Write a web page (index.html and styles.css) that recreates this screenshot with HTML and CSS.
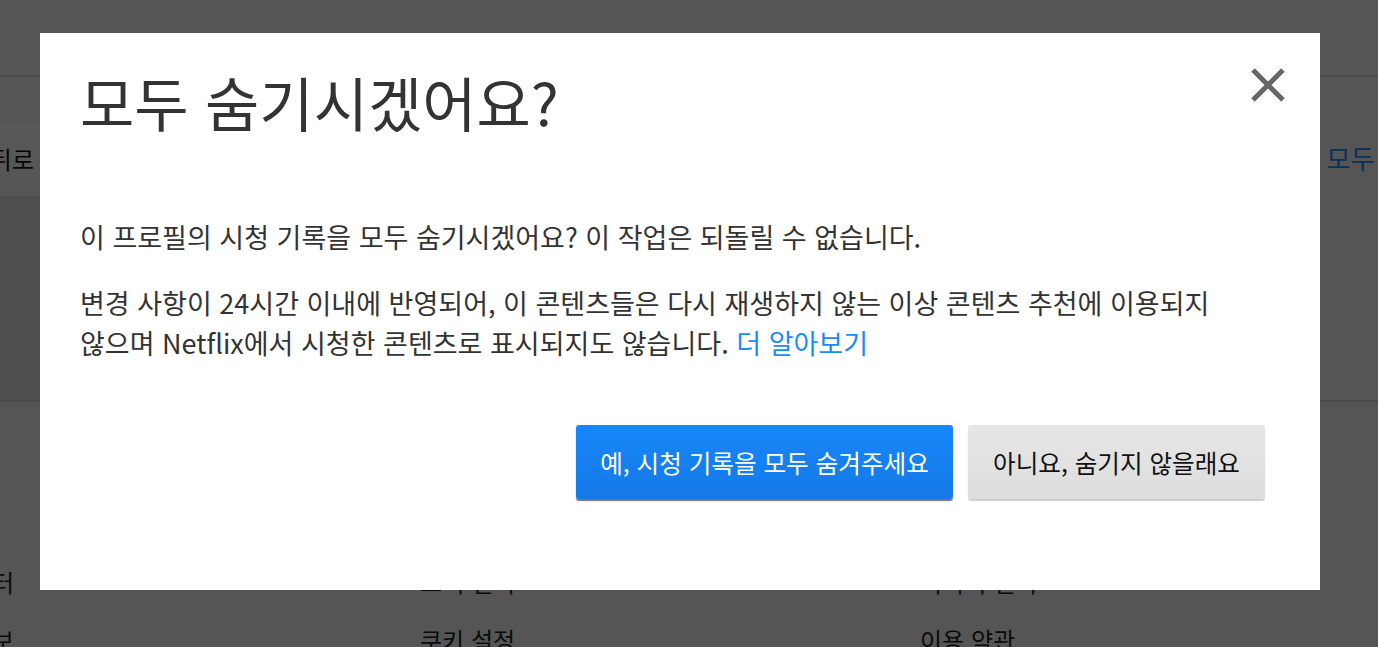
FILE: index.html
```html
<!DOCTYPE html>
<html lang="ko">
<head>
<meta charset="utf-8">
<title>모두 숨기시겠어요?</title>
<link rel="stylesheet" href="styles.css">
</head>
<body>
<div class="page">
  <div class="page-header"></div>
  <div class="page-top">
    <div class="back-btn">뒤로</div>
    <div class="hide-all">모두</div>
  </div>
  <div class="page-list"></div>
  <div class="page-footer">
    <div class="footer-row">
      <span class="fcol c1">센터</span>
      <span class="fcol c2">고객 센터</span>
      <span class="fcol c3">미디어 센터</span>
    </div>
    <div class="footer-row">
      <span class="fcol c1">정보</span>
      <span class="fcol c2">쿠키 설정</span>
      <span class="fcol c3">이용 약관</span>
    </div>
  </div>
</div>
<div class="overlay">
  <div class="modal" role="dialog">
    <div class="modal-head">
      <h1 class="modal-title">모두 숨기시겠어요?</h1>
      <button class="close-btn" aria-label="닫기">
        <svg width="36" height="36" viewBox="0 0 36 36"><path d="M3 3 L33 33 M33 3 L3 33" stroke="#666" stroke-width="5" fill="none"/></svg>
      </button>
    </div>
    <div class="modal-body">
      <p class="para">이 프로필의 시청 기록을 모두 숨기시겠어요? 이 작업은 되돌릴 수 없습니다.</p>
      <p class="para">변경 사항이 24시간 이내에 반영되어, 이 콘텐츠들은 다시 재생하지 않는 이상 콘텐츠 추천에 이용되지 않으며 Netflix에서 시청한 콘텐츠로 표시되지도 않습니다. <a class="learn" href="#">더 알아보기</a></p>
    </div>
    <div class="modal-actions">
      <button class="btn btn-primary">예, 시청 기록을 모두 숨겨주세요</button>
      <button class="btn btn-secondary">아니요, 숨기지 않을래요</button>
    </div>
  </div>
</div>
</body>
</html>
```
FILE: styles.css
```css
html, body {
  margin: 0;
  padding: 0;
}
body {
  font-family: "Noto Sans CJK KR", "Noto Sans", sans-serif;
  background: #f3f3f3;
  width: 1378px;
  height: 647px;
  overflow: hidden;
  word-break: keep-all;
}
.page {
  height: 647px;
  display: flex;
  flex-direction: column;
}
.page-header {
  height: 75px;
  border-bottom: 2px solid #dcdcdc;
  flex: none;
}
.page-top {
  height: 121px;
  display: flex;
  justify-content: space-between;
  align-items: flex-start;
  padding-top: 46px;
  box-sizing: border-box;
}
.back-btn {
  margin-left: -30px;
  width: 70px;
  height: 75px;
  background: linear-gradient(#fcfcfc, #f4f4f4);
  border-bottom: 2px solid #e0e0e0;
  box-sizing: border-box;
  font-size: 24px;
  line-height: 72px;
  color: #111;
  text-align: right;
  padding-right: 6px;
}
.hide-all {
  margin-top: 18px;
  margin-right: 3px;
  font-size: 26.5px;
  line-height: 34px;
  color: #1f8fff;
}
.page-list {
  height: 204px;
  border-bottom: 2px solid #d8d8d8;
  background: linear-gradient(90deg, #e6e6e6 0, #e6e6e6 40px, #f3f3f3 40px);
  box-sizing: border-box;
  flex: none;
}
.page-footer {
  padding-top: 162px;
  display: flex;
  flex-direction: column;
  gap: 22px;
}
.footer-row {
  display: flex;
  font-size: 24px;
  line-height: 36px;
  color: #222;
}
.fcol {
  flex: none;
}
.c1 { margin-left: -36px; text-align: right; width: 50px; margin-right: 406px; }
.c2 { width: 500px; }
.c3 { width: 300px; }

.overlay {
  position: fixed;
  inset: 0;
  background: rgba(0, 0, 0, 0.65);
  padding: 33px 0 0 40px;
  box-sizing: border-box;
}
.modal {
  width: 1280px;
  height: 557px;
  background: #fff;
  box-sizing: border-box;
  padding: 29px 34px 0 40px;
  color: #333;
  display: flex;
  flex-direction: column;
}
.modal-head {
  display: flex;
  justify-content: space-between;
  align-items: flex-start;
}
.modal-title {
  margin: 0;
  font-size: 59px;
  font-weight: 400;
  line-height: 80px;
  color: #333;
}
.close-btn {
  margin: 5px 0 0 0;
  padding: 0;
  border: none;
  background: none;
  width: 36px;
  height: 36px;
  cursor: pointer;
}
.close-btn svg {
  display: block;
}
.modal-body {
  padding-top: 75px;
  padding-right: 40px;
}
.para {
  margin: 0 0 26px 0;
  font-size: 27px;
  line-height: 40px;
  color: #333;
}
.learn {
  color: #1a8cf4;
  text-decoration: none;
}
.modal-actions {
  display: flex;
  justify-content: flex-end;
  gap: 15px;
  margin-top: 36px;
  margin-right: 21px;
}
.btn {
  height: 74px;
  border: none;
  border-radius: 3px;
  font-family: "Noto Sans CJK KR", "Noto Sans", sans-serif;
  font-size: 24.6px;
  padding: 0 20px;
  cursor: pointer;
}
.btn-primary {
  width: 377px;
  background: linear-gradient(#1887fb, #1479e6);
  color: #fff;
  box-shadow: 0 2px 1px rgba(0, 0, 0, 0.55);
}
.btn-secondary {
  width: 297px;
  background: linear-gradient(#e6e6e6, #dddddd);
  color: #111;
  box-shadow: 0 2px 1px rgba(0, 0, 0, 0.2);
}
```
